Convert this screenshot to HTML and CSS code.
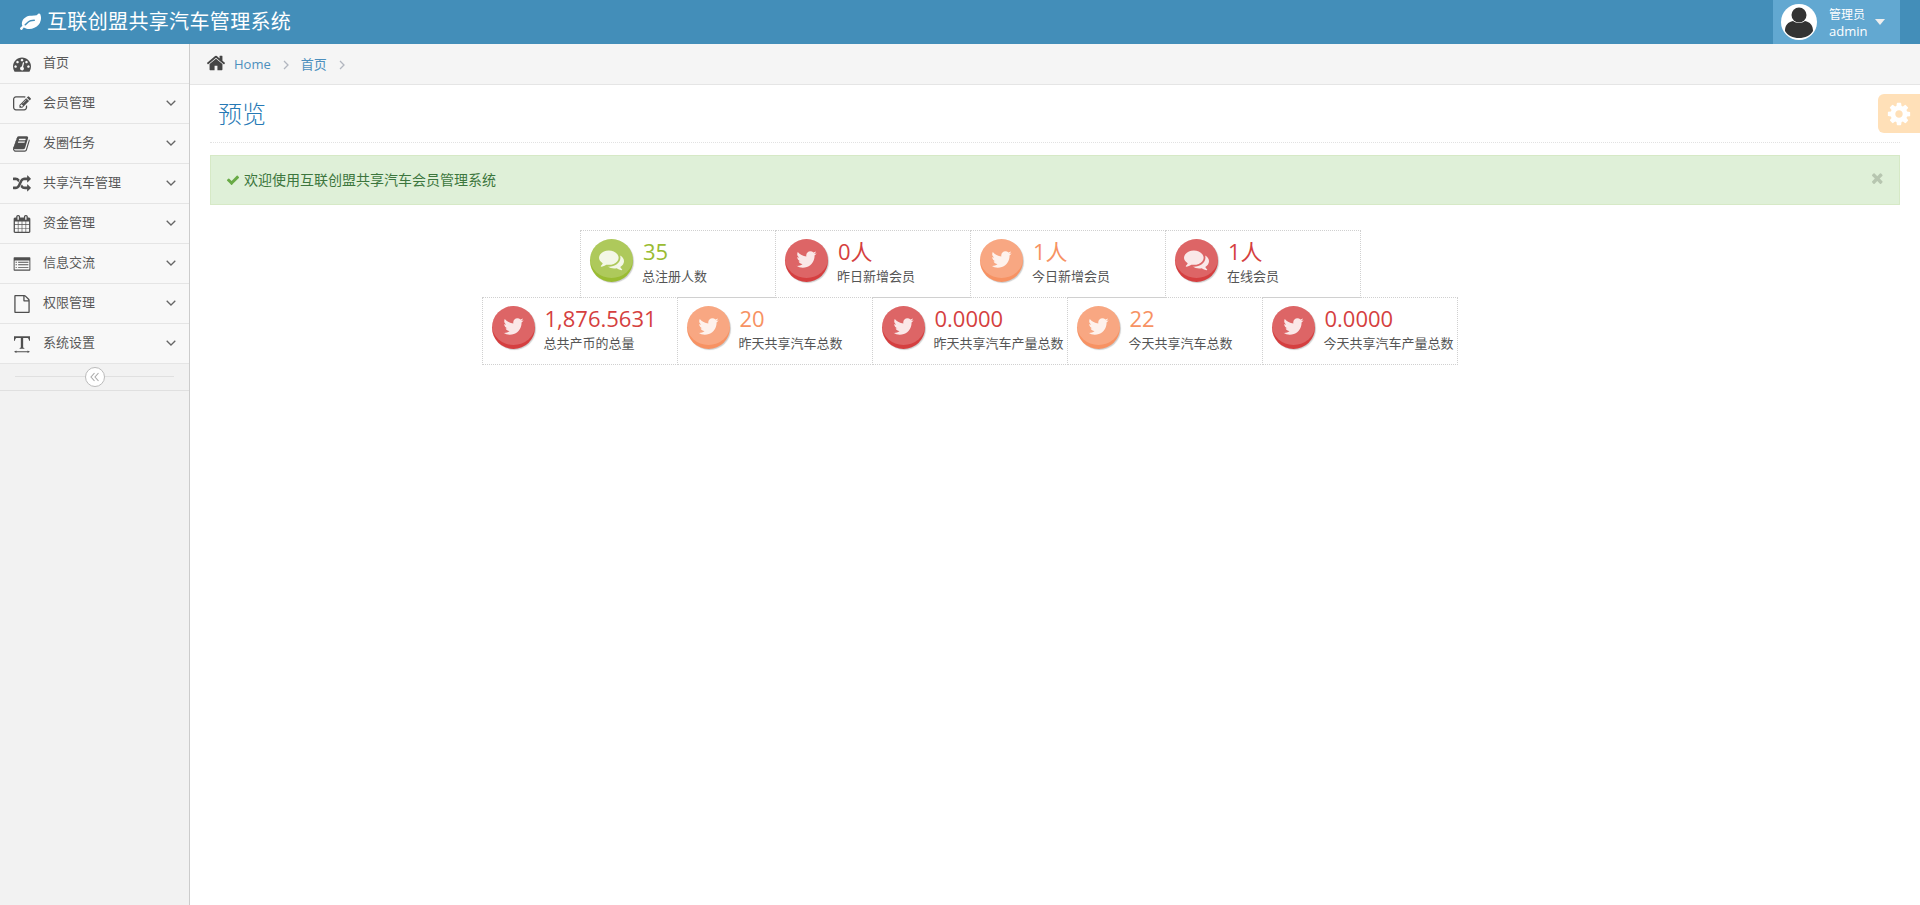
FILE: index.html
```html
<!DOCTYPE html>
<html lang="zh-CN">
<head>
<meta charset="utf-8">
<title>互联创盟共享汽车管理系统</title>
<link rel="stylesheet" href="styles.css">
</head>
<body>
<svg class="defs" width="0" height="0" aria-hidden="true">
  <symbol id="i-home" viewBox="0 0 1792 1792"><path d="M1472 992v480q0 26-19 45t-45 19h-384v-384h-256v384h-384q-26 0-45-19t-19-45v-480q0-1 .5-3t.5-3l575-474 575 474q1 2 1 6zm223-69l-62 74q-8 9-21 11h-3q-13 0-21-7l-692-577-692 577q-12 8-24 7-13-2-21-11l-62-74q-8-10-7-23.500t11-21.500l719-599q32-26 76-26t76 26l244 204v-195q0-14 9-23t23-9h192q14 0 23 9t9 23v408l219 182q10 8 11 21.500t-7 23.500z"/></symbol>
  <symbol id="i-check" viewBox="0 0 1792 1792"><path d="M1671 566q0 40-28 68l-724 724-136 136q-28 28-68 28t-68-28l-136-136-362-362q-28-28-28-68t28-68l136-136q28-28 68-28t68 28l294 295 656-657q28-28 68-28t68 28l136 136q28 28 28 68z"/></symbol>
  <symbol id="i-times" viewBox="0 0 1792 1792"><path d="M1298 1322q0 40-28 68l-136 136q-28 28-68 28t-68-28l-294-294-294 294q-28 28-68 28t-68-28l-136-136q-28-28-28-68t28-68l294-294-294-294q-28-28-28-68t28-68l136-136q28-28 68-28t68 28l294 294 294-294q28-28 68-28t68 28l136 136q28 28 28 68t-28 68l-294 294 294 294q28 28 28 68z"/></symbol>
  <symbol id="i-twitter" viewBox="0 0 1792 1792"><path d="M1684 408q-67 98-162 167 1 14 1 42 0 130-38 259.500t-115.500 248.500-184.500 210.500-258 146-323 54.500q-271 0-496-145 35 4 78 4 225 0 401-138-105-2-188-64.500t-114-159.500q33 5 61 5 43 0 85-11-112-23-185.500-111.500t-73.500-205.500v-4q68 38 146 41-66-44-105-115t-39-154q0-88 44-163 121 149 294.500 238.500t371.500 99.500q-8-38-8-74 0-134 94.500-228.500t228.500-94.500q140 0 236 102 109-21 205-78-37 115-142 178 92-10 184-50z"/></symbol>
  <symbol id="i-comments" viewBox="0 0 1792 1792"><path d="M1408 768q0 139-94 257t-256.500 186.500-353.500 68.500q-86 0-176-16-124 88-278 128-36 9-86 16h-3q-11 0-20.500-8t-11.500-21q-1-3-1-6.500t.5-6.500 2-6l2.500-5 3.500-5.500 4-5 4.500-5 4-4.500q5-6 23-25t26-29.500 22.500-29 25-38.500 20.500-44q-124-72-195-177t-71-224q0-139 94-257t256.500-186.500 353.500-68.500 353.500 68.500 256.500 186.500 94 257zm384 256q0 120-71 224.500t-195 176.500q10 24 20.500 44t25 38.500 22.500 29 26 29.500 23 25q1 1 4 4.500t4.500 5 4 5 3.500 5.500l2.500 5t2 6 .5 6.500-1 6.500q-3 14-13 22t-22 7q-50-7-86-16-154-40-278-128-90 16-176 16-271 0-472-132 58 4 88 4 161 0 309-45t264-129q125-92 192-212t67-254q0-77-23-152 129 71 204 178t75 230z"/></symbol>
  <symbol id="i-dashboard" viewBox="0 0 1792 1792"><path d="M384 1152q0-53-37.500-90.500t-90.500-37.500-90.500 37.500-37.500 90.500 37.500 90.500 90.500 37.500 90.500-37.500 37.500-90.500zm192-448q0-53-37.500-90.500t-90.500-37.500-90.500 37.500-37.500 90.500 37.500 90.500 90.500 37.500 90.500-37.500 37.500-90.500zm428 481l101-382q6-26-7.500-48.500t-38.500-29.500-48 6.500-30 39.500l-101 382q-60 5-107 43.500t-63 98.500q-20 77 20 146t117 89 146-20 89-117q16-60-6-117t-72-91zm660-33q0-53-37.500-90.500t-90.500-37.500-90.500 37.500-37.500 90.500 37.500 90.500 90.500 37.500 90.500-37.500 37.500-90.500zm-640-640q0-53-37.500-90.500t-90.500-37.500-90.500 37.500-37.500 90.500 37.500 90.500 90.500 37.500 90.500-37.500 37.500-90.500zm448 192q0-53-37.500-90.500t-90.500-37.500-90.500 37.500-37.500 90.500 37.500 90.500 90.500 37.500 90.500-37.500 37.500-90.500zm320 448q0 261-141 483-19 29-54 29h-1402q-35 0-54-29-141-221-141-483 0-182 71-348t191-286 286-191 348-71 348 71 286 191 191 286 71 348z"/></symbol>
  <symbol id="i-edit" viewBox="0 0 1792 1792"><path d="M888 1184l116-116-152-152-116 116v56h96v96h56zm440-720q-16-16-33 1l-350 350q-17 17-1 33t33-1l350-350q17-17 1-33zm80 594v190q0 119-84.500 203.500t-203.500 84.500h-832q-119 0-203.500-84.500t-84.500-203.500v-832q0-119 84.500-203.500t203.500-84.500h832q63 0 117 25 15 7 18 23 3 17-9 29l-49 49q-14 14-32 8-23-6-45-6h-832q-66 0-113 47t-47 113v832q0 66 47 113t113 47h832q66 0 113-47t47-113v-126q0-13 9-22l64-64q15-15 35-7t20 29zm-96-738l288 288-672 672h-288v-288zm444 132l-92 92-288-288 92-92q28-28 68-28t68 28l152 152q28 28 28 68t-28 68z"/></symbol>
  <symbol id="i-book" viewBox="0 0 1792 1792"><path d="M1639 478q40 57 18 129l-275 906q-19 64-76.500 107.500t-122.500 43.500h-923q-77 0-148.500-53.500t-99.500-131.500q-24-67-2-127 0-4 3-27t4-37q1-8-3-21.500t-3-19.500q2-11 8-21t16.500-23.500 16.500-23.500q23-38 45-91.500t30-91.500q3-10 .5-30t-.5-28q3-11 17-28t17-23q21-36 42-92t25-90q1-9-2.500-32t.5-28q4-13 22-30.500t22-22.500q19-26 42.500-84.500t27.500-96.500q1-8-3-25.500t-2-26.500q2-8 9-18t18-23 17-21q8-12 16.500-30.500t15-35 16-36 19.500-32 26.500-23.500 36-11.500 47.500 5.500l-1 3q38-9 51-9h761q74 0 114 56t18 130l-274 906q-36 119-71.500 153.500t-128.500 34.500h-869q-27 0-38 15-11 16-1 43 24 70 144 70h923q29 0 56-15.500t35-41.500l300-987q7-22 5-57 38 15 59 43zm-1064 2q-4 13 2 22.500t20 9.500h608q13 0 25.500-9.500t16.500-22.500l21-64q4-13-2-22.500t-20-9.500h-608q-13 0-25.500 9.500t-16.500 22.500zm-83 256q-4 13 2 22.500t20 9.500h608q13 0 25.500-9.500t16.500-22.500l21-64q4-13-2-22.500t-20-9.500h-608q-13 0-25.500 9.500t-16.500 22.500z"/></symbol>
  <symbol id="i-random" viewBox="0 0 1792 1792"><path d="M666 481q-60 92-137 273-22-45-37-72.500t-40.500-63.500-51-56.500-63-35-81.500-14.500h-224q-14 0-23-9t-9-23v-192q0-14 9-23t23-9h224q250 0 410 225zm1126 799q0 14-9 23l-320 320q-9 9-23 9-13 0-22.500-9.500t-9.500-22.500v-192q-32 0-85 .5t-81 1-73-1-71-5-64-10.500-63-18.500-58-28.500-59-40-55-53.500-56-69.500q59-93 136-273 22 45 37 72.500t40.500 63.500 51 56.500 63 35 81.500 14.500h256v-192q0-14 9-23t23-9q12 0 24 10l319 319q9 9 9 23zm0-896q0 14-9 23l-320 320q-9 9-23 9-13 0-22.500-9.500t-9.500-22.500v-192h-256q-48 0-87 15t-69 45-51 61.500-45 77.500q-32 62-78 171-29 66-49.500 111t-54 105-64 100-74 83-90 68.500-106.500 42-128 16.500h-224q-14 0-23-9t-9-23v-192q0-14 9-23t23-9h224q48 0 87-15t69-45 51-61.500 45-77.500q32-62 78-171 29-66 49.500-111t54-105 64-100 74-83 90-68.500 106.500-42 128-16.500h256v-192q0-14 9-23t23-9q12 0 24 10l319 319q9 9 9 23z"/></symbol>
  <symbol id="i-calendar" viewBox="0 0 1792 1792"><path d="M192 1664h288v-288h-288v288zm352 0h320v-288h-320v288zm-352-352h288v-320h-288v320zm352 0h320v-320h-320v320zm-352-384h288v-288h-288v288zm736 736h320v-288h-320v288zm-384-736h320v-288h-320v288zm768 736h288v-288h-288v288zm-384-352h320v-320h-320v320zm-352-864v-288q0-13-9.500-22.500t-22.500-9.500h-64q-13 0-22.500 9.500t-9.500 22.500v288q0 13 9.500 22.500t22.500 9.500h64q13 0 22.500-9.500t9.500-22.500zm736 864h288v-320h-288v320zm-384-384h320v-288h-320v288zm384 0h288v-288h-288v288zm32-480v-288q0-13-9.500-22.500t-22.500-9.500h-64q-13 0-22.500 9.500t-9.500 22.500v288q0 13 9.500 22.500t22.500 9.500h64q13 0 22.500-9.500t9.500-22.500zm384-64v1280q0 52-38 90t-90 38h-1408q-52 0-90-38t-38-90v-1280q0-52 38-90t90-38h128v-96q0-66 47-113t113-47h64q66 0 113 47t47 113v96h384v-96q0-66 47-113t113-47h64q66 0 113 47t47 113v96h128q52 0 90 38t38 90z"/></symbol>
  <symbol id="i-list" viewBox="0 0 1792 1792"><path d="M128 224h1536q64 0 64 64v1216q0 64-64 64H128q-64 0-64-64V288q0-64 64-64zm32 320v864q0 32 32 32h1408q32 0 32-32V544z"/><path d="M256 672h128v96H256zm256 0h1024v96H512zM256 928h128v96H256zm256 0h1024v96H512zM256 1184h128v96H256zm256 0h1024v96H512z"/></symbol>
  <symbol id="i-file" viewBox="0 0 1792 1792"><path d="M1596 380q28 28 48 76t20 88v1152q0 40-28 68t-68 28h-1344q-40 0-68-28t-28-68v-1600q0-40 28-68t68-28h896q40 0 88 20t76 48zm-444-244v376h376q-10-29-22-41l-313-313q-12-12-41-22zm384 1528v-1024h-416q-40 0-68-28t-28-68v-416h-768v1536h1280z"/></symbol>
  <symbol id="i-text" viewBox="0 0 1792 1792"><path d="M100 130H1690V560h-90q-20-230-130-270H1010v930q0 70 120 80v80H660v-80q120-10 120-80V290H320q-110 40-130 270h-90z"/><path d="M340 1540l-240 120 240 120v-70h1110v70l240-120-240-120v70H340z"/></symbol>
  <symbol id="i-gear" viewBox="0 0 1792 1792"><path d="M1152 896q0-106-75-181t-181-75-181 75-75 181 75 181 181 75 181-75 75-181zm512-109v222q0 12-8 23t-20 13l-185 28q-19 54-39 91 35 50 107 138 10 12 10 25t-9 23q-27 37-99 108t-94 71q-12 0-26-9l-138-108q-44 23-91 38-16 136-29 186-7 28-36 28h-222q-14 0-24.500-8.500t-11.500-21.500l-28-184q-49-16-90-37l-141 107q-10 9-25 9-14 0-25-11-126-114-165-168-7-10-7-23 0-12 8-23 15-21 51-66.500t54-70.500q-27-50-41-99l-183-27q-13-2-21-12.500t-8-23.500v-222q0-12 8-23t19-13l186-28q14-46 39-92-40-57-107-138-10-12-10-24 0-10 9-23 26-36 98.500-107.500t94.500-71.500q13 0 26 10l138 107q44-23 91-38 16-136 29-186 7-28 36-28h222q14 0 24.500 8.500t11.500 21.500l28 184q49 16 90 37l142-107q9-9 24-9 13 0 25 10 129 119 165 170 7 8 7 22 0 12-8 23-15 21-51 66.500t-54 70.500q26 50 41 98l183 28q13 2 21 12.500t8 23.500z"/></symbol>
  <symbol id="i-leaf" viewBox="0 0 1792 1792"><path d="M1280 704q0-26-19-45t-45-19q-172 0-318 49.500t-259.500 134-235.500 219.500q-19 21-19 45 0 26 19 45t45 19q24 0 45-19 27-24 74-71t67-66q137-124 268.500-176t313.500-52q26 0 45-19t19-45zm512-198q0 95-20 193-46 224-184.500 383t-357.500 268q-214 108-438 108-148 0-286-47-15-5-88-42t-96-37q-16 0-39.500 32t-45 70-52.500 70-60 32q-30 0-51-11t-31-24-27-42q-2-4-6-11t-5.500-10-3-9.500-1.500-13.500q0-35 31-73.500t68-65.500 68-56 31-48q0-4-14-38t-16-44q-9-51-9-104 0-115 43.500-220t119-184.500 170.500-139 204-95.500q55-18 145-25.500t179.500-9 178.500-6 163.500-24 113.500-56.500l29.500-29.500 29.500-28 27-20 36.500-16 43.500-4.500q39 0 70.500 46t47.500 112 24 124 8 96z"/></symbol>
</svg>

<header class="navbar">
  <a class="brand"><svg class="brand-leaf"><use href="#i-leaf"/></svg><span>互联创盟共享汽车管理系统</span></a>
  <div class="user">
    <svg class="avatar" viewBox="0 0 36 36">
      <circle cx="18" cy="18" r="18" fill="#fff"/>
      <circle cx="18" cy="11" r="7.500" fill="#333"/>
      <path d="M4 27c0-6 3-9 8-10 3 2.500 9 2.500 12 0 5 1 8 4 8 10-2.500 4.500-8 7-14 7s-11.500-2.500-14-7z" fill="#333"/>
    </svg>
    <div class="user-info"><small>管理员</small><span>admin</span></div>
    <i class="caret"></i>
  </div>
</header>

<div class="layout">
  <aside class="sidebar">
    <nav class="menu">
      <a class="menu-item"><svg class="menu-icon"><use href="#i-dashboard"/></svg><span>首页</span></a>
      <a class="menu-item"><svg class="menu-icon"><use href="#i-edit"/></svg><span>会员管理</span><svg class="chev" viewBox="0 0 10 6"><path d="M.7.7 5 5 9.300.7"/></svg></a>
      <a class="menu-item"><svg class="menu-icon"><use href="#i-book"/></svg><span>发圈任务</span><svg class="chev" viewBox="0 0 10 6"><path d="M.7.7 5 5 9.300.7"/></svg></a>
      <a class="menu-item"><svg class="menu-icon"><use href="#i-random"/></svg><span>共享汽车管理</span><svg class="chev" viewBox="0 0 10 6"><path d="M.7.7 5 5 9.300.7"/></svg></a>
      <a class="menu-item"><svg class="menu-icon"><use href="#i-calendar"/></svg><span>资金管理</span><svg class="chev" viewBox="0 0 10 6"><path d="M.7.7 5 5 9.300.7"/></svg></a>
      <a class="menu-item"><svg class="menu-icon"><use href="#i-list"/></svg><span>信息交流</span><svg class="chev" viewBox="0 0 10 6"><path d="M.7.7 5 5 9.300.7"/></svg></a>
      <a class="menu-item"><svg class="menu-icon"><use href="#i-file"/></svg><span>权限管理</span><svg class="chev" viewBox="0 0 10 6"><path d="M.7.7 5 5 9.300.7"/></svg></a>
      <a class="menu-item"><svg class="menu-icon"><use href="#i-text"/></svg><span>系统设置</span><svg class="chev" viewBox="0 0 10 6"><path d="M.7.7 5 5 9.300.7"/></svg></a>
    </nav>
    <div class="collapse">
      <span class="collapse-btn"><svg viewBox="0 0 10 10"><path d="M4.500 1 1 5l3.500 4M8.500 1 5 5l3.500 4"/></svg></span>
    </div>
  </aside>

  <main class="main">
    <div class="breadcrumbs">
      <svg class="home"><use href="#i-home"/></svg>
      <a>Home</a>
      <svg class="sep" viewBox="0 0 6 10"><path d="M1 1l4 4-4 4"/></svg>
      <a>首页</a>
      <svg class="sep" viewBox="0 0 6 10"><path d="M1 1l4 4-4 4"/></svg>
    </div>
    <div class="settings"><svg><use href="#i-gear"/></svg></div>
    <div class="content">
      <div class="page-header"><h1>预览</h1></div>
      <div class="alert">
        <svg class="alert-check"><use href="#i-check"/></svg>
        <span>欢迎使用互联创盟共享汽车会员管理系统</span>
        <svg class="alert-close"><use href="#i-times"/></svg>
      </div>
      <div class="stats">
        <div class="stat-row first">
          <div class="stat green"><div class="stat-icon"><i></i><svg class="bubble"><use href="#i-comments"/></svg></div><div class="stat-text"><b>35</b><span>总注册人数</span></div></div>
          <div class="stat red"><div class="stat-icon"><i></i><svg><use href="#i-twitter"/></svg></div><div class="stat-text"><b>0人</b><span>昨日新增会员</span></div></div>
          <div class="stat orange"><div class="stat-icon"><i></i><svg><use href="#i-twitter"/></svg></div><div class="stat-text"><b>1人</b><span>今日新增会员</span></div></div>
          <div class="stat red"><div class="stat-icon"><i></i><svg class="bubble"><use href="#i-comments"/></svg></div><div class="stat-text"><b>1人</b><span>在线会员</span></div></div>
        </div>
        <div class="stat-row">
          <div class="stat red"><div class="stat-icon"><i></i><svg><use href="#i-twitter"/></svg></div><div class="stat-text"><b>1,876.5631</b><span>总共产币的总量</span></div></div>
          <div class="stat orange"><div class="stat-icon"><i></i><svg><use href="#i-twitter"/></svg></div><div class="stat-text"><b>20</b><span>昨天共享汽车总数</span></div></div>
          <div class="stat red"><div class="stat-icon"><i></i><svg><use href="#i-twitter"/></svg></div><div class="stat-text"><b>0.0000</b><span>昨天共享汽车产量总数</span></div></div>
          <div class="stat orange"><div class="stat-icon"><i></i><svg><use href="#i-twitter"/></svg></div><div class="stat-text"><b>22</b><span>今天共享汽车总数</span></div></div>
          <div class="stat red"><div class="stat-icon"><i></i><svg><use href="#i-twitter"/></svg></div><div class="stat-text"><b>0.0000</b><span>今天共享汽车产量总数</span></div></div>
        </div>
      </div>
    </div>
  </main>
</div>
</body>
</html>
```

FILE: styles.css
```css
* { box-sizing: border-box; }
html, body { height: 100%; }
body {
  margin: 0;
  font: 13px/1.5 "Open Sans", "Noto Sans CJK SC", sans-serif;
  color: #393939;
  background: #fff;
  display: flex;
  flex-direction: column;
  overflow: hidden;
}
.defs { position: absolute; }

.navbar {
  height: 44px;
  flex: none;
  background: #438eb9;
  color: #fff;
  display: flex;
  align-items: center;
  justify-content: space-between;
  padding: 0 20px;
}
.brand { display: flex; align-items: center; font-size: 20px; letter-spacing: .35px; }
.brand-leaf { width: 21px; height: 21px; margin-right: 6px; fill: #fff; }
.user {
  height: 44px;
  width: 127px;
  background: #62a8d1;
  display: flex;
  align-items: center;
  padding-left: 8px;
}
.avatar { width: 36px; height: 36px; flex: none; }
.user-info { margin-left: 12px; display: flex; flex-direction: column; line-height: 16px; padding-top: 1px; }
.user-info small { font-size: 12px; }
.user-info span { font-size: 13px; }
.caret {
  margin-left: 8px;
  width: 0;
  height: 0;
  border: 5px solid transparent;
  border-top: 6px solid #eee;
  border-bottom: 0;
}

.layout { flex: 1; display: flex; min-height: 0; }
.sidebar {
  width: 190px;
  flex: none;
  background: #f2f2f2;
  border-right: 1px solid #ccc;
}
.menu-item {
  height: 40px;
  display: flex;
  align-items: center;
  background: #f8f8f8;
  border-bottom: 1px solid #e5e5e5;
  color: #585858;
  padding: 0 13px;
}
.menu-icon { width: 18px; height: 18px; flex: none; margin: 0 12px 0 0; fill: #4f4f4f; }
.menu-item span { flex: 1; padding-bottom: 1px; }
.chev { width: 10px; height: 6px; flex: none; fill: none; stroke: #666; stroke-width: 1.300; margin-top: -2px; }
.collapse {
  height: 27px;
  position: relative;
  display: flex;
  align-items: center;
  justify-content: center;
  border-bottom: 1px solid #e0e0e0;
}
.collapse::before {
  content: "";
  position: absolute;
  left: 15px;
  right: 15px;
  top: 12px;
  border-top: 1px solid #e0e0e0;
}
.collapse-btn {
  position: relative;
  width: 20px;
  height: 20px;
  margin-bottom: 1px;
  border: 1px solid #bbb;
  border-radius: 50%;
  background: #fff;
  display: flex;
  align-items: center;
  justify-content: center;
}
.collapse-btn svg { width: 10px; height: 10px; fill: none; stroke: #aaa; stroke-width: 1.100; }

.main { flex: 1; min-width: 0; position: relative; }
.breadcrumbs {
  height: 41px;
  background: #f5f5f5;
  border-bottom: 1px solid #e5e5e5;
  display: flex;
  align-items: center;
  padding-left: 16px;
  color: #4c8fbd;
}
.breadcrumbs a { padding-top: 2px; }
.home { width: 20px; height: 20px; fill: #444; margin-right: 8px; margin-top: -2px; }
.sep { width: 6px; height: 10px; margin: 2px 12px 0; fill: none; stroke: #b2b6bf; stroke-width: 1.300; }

.settings {
  position: absolute;
  top: 50px;
  right: 0;
  width: 42px;
  height: 39px;
  background: #ffe0b8;
  border-radius: 6px 0 0 6px;
  display: flex;
  align-items: center;
  justify-content: center;
}
.settings svg { width: 26px; height: 26px; fill: #fff; }

.content { padding: 0 20px; }
.page-header { height: 58px; border-bottom: 1px dotted #e2e2e2; padding-left: 8px; }
.page-header h1 {
  margin: 0;
  padding-top: 11px;
  font-size: 24px;
  line-height: 36px;
  font-weight: 300;
  color: #2679b5;
}
.alert {
  margin-top: 12px;
  height: 50px;
  background: #dff0d8;
  border: 1px solid #d6e9c6;
  color: #3c763d;
  font-size: 14px;
  display: flex;
  align-items: center;
  padding: 0 15px;
}
.alert-check { width: 14px; height: 14px; fill: #69aa46; margin-right: 4px; }
.alert span { flex: 1; padding-bottom: 2px; }
.alert-close { width: 16px; height: 16px; fill: #b7c6b0; margin: 0 -3px 5px 0; }

.stats { width: 1520px; margin: 25px 0 0; }
.stat-row { display: flex; justify-content: center; }
.stat-row.first { padding-left: 2px; }
.stat {
  width: 196px;
  height: 68px;
  margin: -1px 0 0 -1px;
  border: 1px dotted #d0d0d0;
  padding: 8px 0 0 9px;
  display: flex;
  white-space: nowrap;
}
.stat-row.first .stat { margin-top: 0; }
.stat-icon {
  position: relative;
  width: 43px;
  height: 43px;
  flex: none;
  border-radius: 50%;
  box-shadow: 1px 1px 1px rgba(0,0,0,.2);
  overflow: hidden;
  display: flex;
  align-items: center;
  justify-content: center;
}
.stat-icon i {
  position: absolute;
  left: 0;
  top: 0;
  width: 43px;
  height: 39px;
  border-radius: 50%;
  background: rgba(255,255,255,.2);
}
.stat-icon svg { position: relative; width: 23px; height: 23px; fill: rgba(255,255,255,.85); margin-top: -3px; }
.stat-icon svg.bubble { width: 25px; height: 25px; }
.stat-text { margin-left: 10px; display: flex; flex-direction: column; }
.stat-text b { font-size: 22px; line-height: 28px; font-weight: 400; margin-top: -2px; }
.stat-text span { font-size: 13px; line-height: 20px; color: #555; margin-left: -1px; margin-top: 1px; }
.green .stat-icon { background: #9abc32; }
.green b { color: #9abc32; }
.red .stat-icon { background: #d53f40; }
.red b { color: #d53f40; }
.orange .stat-icon { background: #f79263; }
.orange b { color: #f79263; }
```
